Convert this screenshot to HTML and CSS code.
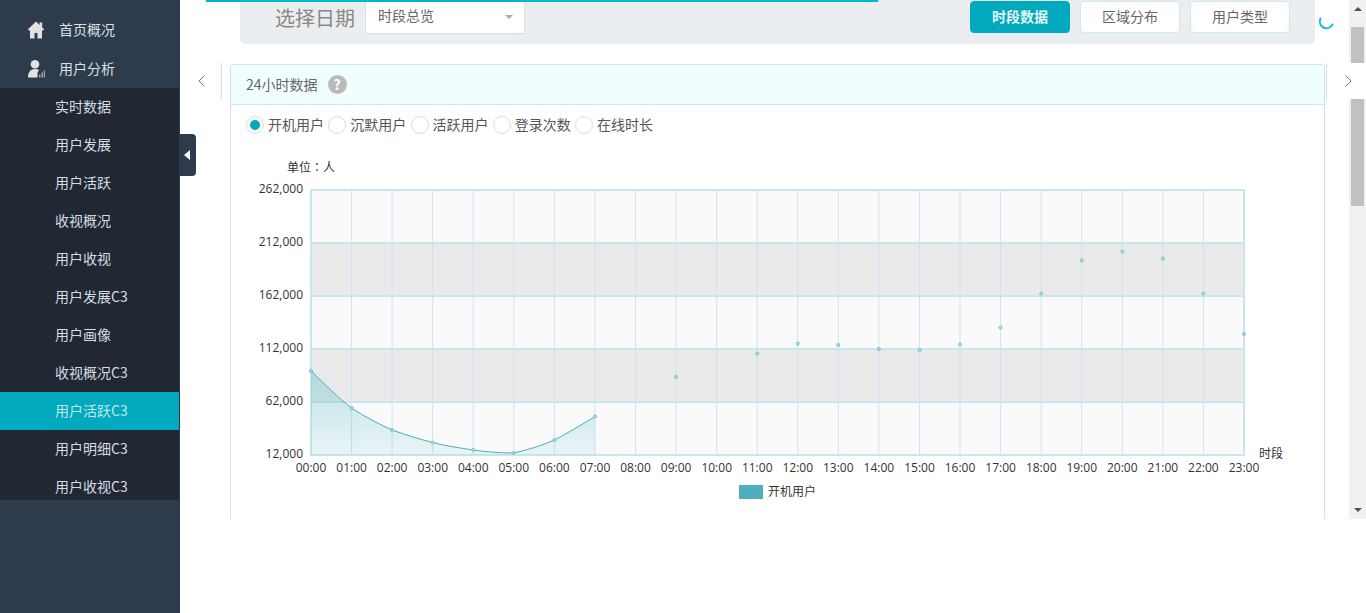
FILE: index.html
```html
<!DOCTYPE html>
<html lang="zh-CN">
  <head>
    <meta charset="UTF-8" />
    <title>用户活跃C3</title>
    <link rel="stylesheet" href="styles.css">
  </head>
  <body>
    <aside class="sidebar">
      <a class="nav-top">
        <svg class="nav-icon" viewBox="0 0 18 18"><path d="M9 0.500 0.800 8.500l1.300 1.300L3 9v8.500h4.500V12h3v5.500H15V9l.9.800 1.300-1.300L15.200 6.500V1.500h-2.700V3.900z" /></svg>
        首页概况
      </a>
      <a class="nav-top">
        <svg class="nav-icon" viewBox="0 0 18 18"><circle cx="8" cy="4.300" r="4.300" /><path d="M1 17.500c0-5.500 2.500-8.500 7-8.500 1.700 0 3.200.5 4.200 1.300-1.300 1-1.700 2-1.700 3.200v4z" /><path class="nav-bars" d="M12 17.500v-3h1.500v3zM14.500 17.500v-5H16v5zM16.700 17.500v-7h1.300v7z" /></svg>
        用户分析
      </a>
      <nav class="sub-menu">
        <a>实时数据</a>
        <a>用户发展</a>
        <a>用户活跃</a>
        <a>收视概况</a>
        <a>用户收视</a>
        <a>用户发展C3</a>
        <a>用户画像</a>
        <a>收视概况C3</a>
        <a class="active">用户活跃C3</a>
        <a>用户明细C3</a>
        <a>用户收视C3</a>
      </nav>
      <div class="collapse-tab"><span class="collapse-arrow"></span></div>
    </aside>

    <main class="content">
      <div class="page">
        <div class="filter-bar">
          <span class="filter-label">选择日期</span>
          <div class="select">时段总览<span class="select-caret"></span></div>
          <div class="tabs">
            <button class="tab tab-on">时段数据</button>
            <button class="tab">区域分布</button>
            <button class="tab">用户类型</button>
          </div>
        </div>

        <section class="panel">
          <header class="panel-head">
            24小时数据
            <span class="help">?</span>
          </header>
          <div class="radios">
            <label class="radio"><i class="dot dot-on"></i>开机用户</label>
            <label class="radio"><i class="dot"></i>沉默用户</label>
            <label class="radio"><i class="dot"></i>活跃用户</label>
            <label class="radio"><i class="dot"></i>登录次数</label>
            <label class="radio"><i class="dot"></i>在线时长</label>
          </div>
          <svg class="chart" width="1093" height="369" viewBox="231 150 1093 369">
            <defs>
              <linearGradient id="areaFill" x1="0" y1="0" x2="0" y2="1">
                <stop offset="0" stop-color="#5cc0cc" stop-opacity="0.4" />
                <stop offset="1" stop-color="#5cc0cc" stop-opacity="0.1" />
              </linearGradient>
            </defs>

            <rect x="311" y="190" width="933" height="53" fill="#fafafa" />
            <rect x="311" y="243" width="933" height="53" fill="#eaeaea" />
            <rect x="311" y="296" width="933" height="53" fill="#fafafa" />
            <rect x="311" y="349" width="933" height="53" fill="#eaeaea" />
            <rect x="311" y="402" width="933" height="53" fill="#fafafa" />

            <path class="grid-v" d="M351.600 190V455M392.100 190V455M432.700 190V455M473.300 190V455M513.800 190V455M554.400 190V455M595 190V455M635.500 190V455M676.100 190V455M716.700 190V455M757.200 190V455M797.800 190V455M838.300 190V455M878.900 190V455M919.500 190V455M960 190V455M1000.600 190V455M1041.200 190V455M1081.700 190V455M1122.300 190V455M1162.900 190V455M1203.400 190V455" />
            <path class="grid-h" d="M310 190H1245M310 243H1245M310 296H1245M310 349H1245M310 402H1245M310 455H1245M311 190V455M1244 190V455" />

            <path fill="url(#areaFill)" d="M311 371C325 384 338 398 351.600 408C365 417 379 424 392.100 430C406 435 419 439 432.700 442.500C446 446 460 448 473.300 450C487 452 500 453 513.800 453C527 450 541 446 554.400 440C568 433 581 425 595 416.500V455H311Z" />
            <path class="line" d="M311 371C325 384 338 398 351.600 408C365 417 379 424 392.100 430C406 435 419 439 432.700 442.500C446 446 460 448 473.300 450C487 452 500 453 513.800 453C527 450 541 446 554.400 440C568 433 581 425 595 416.500" />

            <g class="points">
              <circle cx="311" cy="371" r="1.500" />
              <circle cx="351.600" cy="408" r="1.500" />
              <circle cx="392.100" cy="430" r="1.500" />
              <circle cx="432.700" cy="442.500" r="1.500" />
              <circle cx="473.300" cy="450" r="1.500" />
              <circle cx="513.800" cy="453" r="1.500" />
              <circle cx="554.400" cy="440" r="1.500" />
              <circle cx="595" cy="416.500" r="1.500" />
              <circle cx="676.100" cy="377" r="1.500" />
              <circle cx="757.200" cy="353.500" r="1.500" />
              <circle cx="797.800" cy="343.500" r="1.500" />
              <circle cx="838.300" cy="345" r="1.500" />
              <circle cx="878.900" cy="349" r="1.500" />
              <circle cx="919.500" cy="350" r="1.500" />
              <circle cx="960" cy="344.500" r="1.500" />
              <circle cx="1000.600" cy="327.500" r="1.500" />
              <circle cx="1041.200" cy="293.500" r="1.500" />
              <circle cx="1081.700" cy="260.500" r="1.500" />
              <circle cx="1122.300" cy="251.500" r="1.500" />
              <circle cx="1162.900" cy="258.500" r="1.500" />
              <circle cx="1203.400" cy="293.500" r="1.500" />
              <circle cx="1244" cy="334" r="1.500" />
            </g>

            <text class="unit" lang="zh-TW" x="287" y="172">单位：人</text>
            <g class="y-labels">
              <text x="303" y="193">262,000</text>
              <text x="303" y="246">212,000</text>
              <text x="303" y="299">162,000</text>
              <text x="303" y="352">112,000</text>
              <text x="303" y="405">62,000</text>
              <text x="303" y="458">12,000</text>
            </g>
            <g class="x-labels">
              <text x="311" y="472">00:00</text>
              <text x="351.600" y="472">01:00</text>
              <text x="392.100" y="472">02:00</text>
              <text x="432.700" y="472">03:00</text>
              <text x="473.300" y="472">04:00</text>
              <text x="513.800" y="472">05:00</text>
              <text x="554.400" y="472">06:00</text>
              <text x="595" y="472">07:00</text>
              <text x="635.500" y="472">08:00</text>
              <text x="676.100" y="472">09:00</text>
              <text x="716.700" y="472">10:00</text>
              <text x="757.200" y="472">11:00</text>
              <text x="797.800" y="472">12:00</text>
              <text x="838.300" y="472">13:00</text>
              <text x="878.900" y="472">14:00</text>
              <text x="919.500" y="472">15:00</text>
              <text x="960" y="472">16:00</text>
              <text x="1000.600" y="472">17:00</text>
              <text x="1041.200" y="472">18:00</text>
              <text x="1081.700" y="472">19:00</text>
              <text x="1122.300" y="472">20:00</text>
              <text x="1162.900" y="472">21:00</text>
              <text x="1203.400" y="472">22:00</text>
              <text x="1244" y="472">23:00</text>
            </g>
            <text class="unit" x="1259" y="458">时段</text>
            <rect x="739" y="485" width="24" height="14" fill="#4cafbb" />
            <text class="unit" x="768" y="496">开机用户</text>
          </svg>
        </section>

        <div class="progress"></div>
        <svg class="spinner" width="15" height="15" viewBox="0 0 15 15"><path d="M1.500 2.500A6.500 6.500 0 0 0 13.500 8.500" /></svg>
        <div class="pager pager-prev">
          <svg width="9" height="14" viewBox="0 0 9 14"><path d="M7.500 1.500 2 7 7.500 12.500" /></svg>
        </div>
        <div class="pager pager-next">
          <svg width="9" height="14" viewBox="0 0 9 14"><path d="M1.500 1.500 7 7 1.500 12.500" /></svg>
        </div>
      </div>

      <div class="scrollbar">
        <span class="scroll-up"></span>
        <span class="scroll-thumb"></span>
        <span class="scroll-down"></span>
      </div>
    </main>
  </body>
</html>
```

FILE: styles.css
```css
* {
  box-sizing: border-box;
}

body {
  display: flex;
  height: 100vh;
  margin: 0;
  overflow: hidden;
  background-color: #fff;
  font-family: "Noto Sans CJK SC", "Open Sans", sans-serif;
  font-size: 14px;
  color: #555;
}

/* 左侧菜单 */
.sidebar {
  position: relative;
  flex: 0 0 180px;
  padding-top: 11px;
  background-color: #2d3b4c;
}

.nav-top {
  display: flex;
  align-items: center;
  gap: 14px;
  height: 38.500px;
  padding-left: 27px;
  padding-bottom: 2px;
  color: #dbe0e4;
}

.nav-icon {
  width: 18px;
  height: 18px;
  margin-top: 2px;
  fill: #e2e2e2;
}

.nav-bars {
  fill: #9aa2ab;
}

.sub-menu {
  width: 179px;
  height: 412px;
  overflow: hidden;
  background-color: #212834;
}

.sub-menu a {
  display: block;
  height: 38px;
  padding-left: 55px;
  line-height: 36px;
  color: #d5dce2;
}

.sub-menu a.active {
  background-color: #00a9bd;
  color: #c5e6ea;
}

.collapse-tab {
  position: absolute;
  top: 134px;
  left: 180px;
  width: 16px;
  height: 42px;
  display: flex;
  align-items: center;
  padding-left: 4px;
  border-radius: 0 4px 4px 0;
  background-color: #2d3b4c;
}

.collapse-arrow {
  border-top: 5.500px solid transparent;
  border-bottom: 5.500px solid transparent;
  border-right: 6px solid #fff;
}

/* 主区域 */
.content {
  display: flex;
  flex: 1;
  height: 519px;
  overflow: hidden;
}

.page {
  position: relative;
  flex: 1;
  min-width: 0;
}

.progress {
  position: absolute;
  top: 0;
  left: 26px;
  width: 672px;
  height: 2px;
  background-color: #00bcc8;
}

.filter-bar {
  display: flex;
  align-items: flex-start;
  height: 44px;
  margin: 0 34px 0 60px;
  padding-left: 35px;
  border-radius: 0 0 5px 5px;
  background-color: #ebeef1;
}

.filter-label {
  width: 90px;
  font-size: 20px;
  line-height: 36px;
  color: #888;
}

.select {
  position: relative;
  width: 160px;
  height: 34px;
  padding-left: 12px;
  line-height: 30px;
  background-color: #fff;
  border: 1px solid #dcdfe2;
  border-top: none;
  border-radius: 0 0 2px 2px;
  color: #666;
}

.select-caret {
  position: absolute;
  top: 15px;
  right: 11px;
  border-top: 4px solid #aaa;
  border-left: 4px solid transparent;
  border-right: 4px solid transparent;
}

.tabs {
  display: flex;
  gap: 10px;
  margin-left: auto;
  margin-right: 25px;
  padding-top: 1px;
}

.tab {
  width: 100px;
  height: 32px;
  padding: 0 0 2px;
  font: inherit;
  color: #666;
  background-color: #fff;
  border: 1px solid #cfe9ef;
  border-radius: 4px;
}

.tab-on {
  border-color: #00a9bd;
  background-color: #00a9bd;
  color: #e6f7f9;
  font-weight: bold;
}

.panel {
  height: 455px;
  margin: 20px 24px 0 50px;
  overflow: hidden;
  border: 1px solid #c9e7ef;
  border-bottom: none;
  border-radius: 4px 4px 0 0;
}

.panel-head {
  display: flex;
  align-items: center;
  gap: 10px;
  height: 40px;
  padding: 0 0 2px 15px;
  background-color: #f0fffe;
  border-bottom: 1px solid #c9e7ef;
  color: #666;
}

.help {
  width: 19px;
  height: 19px;
  margin-top: 2px;
  border-radius: 50%;
  background-color: #bbb;
  color: #fff;
  font-weight: bold;
  font-size: 14px;
  line-height: 19px;
  text-align: center;
}

.radios {
  display: flex;
  gap: 4.250px;
  height: 45px;
  padding: 9px 0 0 15px;
}

.radio {
  display: flex;
  align-items: center;
  gap: 4px;
  height: 20px;
}

.dot {
  position: relative;
  width: 18px;
  height: 18px;
  margin-top: 2px;
  border: 1px solid #ddd;
  border-radius: 50%;
}

.dot-on::after {
  content: "";
  position: absolute;
  top: 3px;
  left: 3px;
  width: 10px;
  height: 10px;
  border-radius: 50%;
  background-color: #00a9bd;
}

.chart {
  display: block;
  font-family: "Open Sans", "Noto Sans CJK SC", sans-serif;
  font-size: 12px;
}

.chart text {
  fill: #333;
}

.chart .unit {
  font-family: "Noto Sans CJK TC", sans-serif;
}

.grid-v {
  fill: none;
  stroke: #c9e6f0;
  stroke-width: 1;
}

.grid-h {
  fill: none;
  stroke: #c9e6f0;
  stroke-width: 2;
}

.line {
  fill: none;
  stroke: #4cafbb;
  stroke-width: 1;
}

.points circle {
  fill: #b5e0e4;
  stroke: #6fc0ca;
  stroke-width: 1;
}

.y-labels text {
  text-anchor: end;
}

.x-labels text {
  text-anchor: middle;
}

.spinner {
  position: absolute;
  top: 16px;
  left: 1139px;
  fill: none;
  stroke: #1cc0d0;
  stroke-width: 2;
  stroke-linecap: round;
}

.pager {
  position: absolute;
  top: 63px;
  display: flex;
  align-items: center;
  height: 36px;
  background-color: #fff;
}

.pager svg {
  fill: none;
  stroke: #777;
  stroke-width: 1;
}

.pager-prev {
  left: 0;
  width: 42px;
  justify-content: center;
  padding-left: 1px;
  border-right: 1px solid #ddd;
}

.pager-next {
  left: 1146px;
  width: 40px;
  z-index: 2;
  padding-left: 17px;
  border-left: 1px solid #ddd;
}

.scrollbar {
  position: relative;
  flex: 0 0 17px;
  background-color: #f1f1f1;
}

.scroll-thumb {
  position: absolute;
  top: 27px;
  left: 2px;
  width: 13px;
  height: 179px;
  background-color: #c1c1c1;
}

.scroll-up,
.scroll-down {
  position: absolute;
  left: 5px;
  border-left: 4px solid transparent;
  border-right: 4px solid transparent;
}

.scroll-up {
  top: 7px;
  border-bottom: 4px solid #505050;
}

.scroll-down {
  bottom: 7px;
  border-top: 4px solid #505050;
}
```
